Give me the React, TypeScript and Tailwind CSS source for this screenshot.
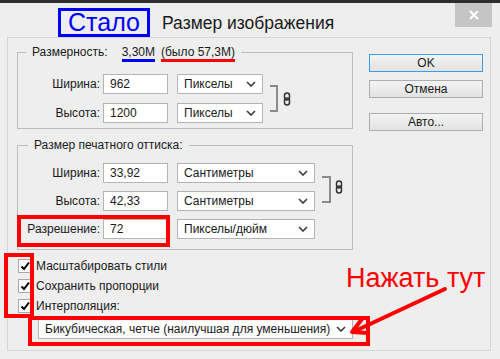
import React from "react";

const Chevron = () => (
  <svg width="10" height="6" viewBox="0 0 10 6" className="shrink-0">
    <path d="M1 1 L5 5 L9 1" fill="none" stroke="#3a3a3a" strokeWidth="1.6" />
  </svg>
);

const LinkIcon = () => (
  <svg width="8" height="14" viewBox="0 0 8 14">
    <rect x="1.5" y="1" width="5" height="7" rx="2.5" fill="none" stroke="#333" strokeWidth="1.5" />
    <rect x="1.5" y="6" width="5" height="7" rx="2.5" fill="none" stroke="#333" strokeWidth="1.5" />
  </svg>
);

const Select = ({ value, w }: { value: string; w: string }) => (
  <div className={`${w} h-[20px] bg-white border border-[#b4b4b4] flex items-center justify-between pl-[6px] pr-[6px]`}>
    <span>{value}</span>
    <Chevron />
  </div>
);

const Row = ({ label, value, unit, w }: { label: string; value: string; unit: string; w: string }) => (
  <div className="flex items-center h-[20px]">
    <span className="w-[85px] text-right pr-[3px]">{label}</span>
    <div className="w-[65px] h-[20px] bg-white border border-[#b4b4b4] flex items-center pl-[6px]">{value}</div>
    <div className="ml-[9px]">
      <Select value={unit} w={w} />
    </div>
  </div>
);

const Check = ({ label }: { label: string }) => (
  <div className="flex items-center h-[20px]">
    <div className="w-[14px] h-[14px] bg-white border border-[#a8a8a8] flex items-center justify-center">
      <svg width="10" height="10" viewBox="0 0 10 10">
        <path d="M1.5 5.5 L4 8 L9 1.5" fill="none" stroke="#000" strokeWidth="2" />
      </svg>
    </div>
    <span className="ml-[4px]">{label}</span>
  </div>
);

const Btn = ({ label, primary }: { label: string; primary?: boolean }) => (
  <div
    className={`w-[114px] h-[18px] flex items-center justify-center bg-gradient-to-b from-[#f4f4f4] to-[#e2e2e2] border ${
      primary ? "border-[#3c9ce8]" : "border-[#adadad]"
    }`}
  >
    {label}
  </div>
);

const App = () => {
  return (
    <div className="relative w-[500px] h-[359px] overflow-hidden bg-[#eeeeee] text-[12px] text-[#1a1a1a] font-['Liberation_Sans',Arial,sans-serif]">
      <div className="h-[3px] bg-[#2e2e2e]" />

      {/* header */}
      <div className="flex items-start h-[34px]">
        <div className="ml-[58px] mt-[5px] w-[92px] h-[29px] border-[3px] border-[#0000ff] flex items-center justify-center text-[25px] leading-none text-[#0000ff]">
          Стало
        </div>
        <div className="ml-[12px] mt-[8px] text-[17.5px] leading-[24px]">Размер изображения</div>
        <div className="ml-auto mr-[8px] w-[37px] h-[24px] bg-[#c5c5c5] flex items-center justify-center">
          <svg width="10" height="10" viewBox="0 0 10 10">
            <path d="M1 1 L9 9 M9 1 L1 9" stroke="#fff" strokeWidth="2" />
          </svg>
        </div>
      </div>

      {/* main panel */}
      <div className="ml-[7px] w-[484px] h-[314px] border border-[#d6d6d6] flex">
        <div className="pl-[9px] w-[346px]">
          <fieldset className="mt-[6px] w-[336px] border border-[#bdbdbd] pb-[5px]">
            <legend className="ml-[8px] px-[6px] leading-[16px]">
              Размерность:
              <span className="ml-[14px] border-b-[3px] border-[#0000ff]">3,30M</span>
              <span className="ml-[6px] border-b-[3px] border-[#ff0000]">(было 57,3M)</span>
            </legend>
            <div className="mt-[14px] flex items-center">
              <div className="flex flex-col gap-[9px]">
                <Row label="Ширина:" value="962" unit="Пикселы" w="w-[86px]" />
                <Row label="Высота:" value="1200" unit="Пикселы" w="w-[86px]" />
              </div>
              <div className="ml-[7px] w-[8px] h-[27px] border-t-2 border-r-2 border-b-2 border-[#8a8a8a]" />
              <div className="ml-[5px]">
                <LinkIcon />
              </div>
            </div>
          </fieldset>

          <fieldset className="mt-[8px] w-[336px] border border-[#bdbdbd] pb-[10px]">
            <legend className="ml-[10px] px-[6px] leading-[16px]">Размер печатного оттиска:</legend>
            <div className="mt-[10px] flex flex-col gap-[8px]">
              <div className="flex items-center">
                <div className="flex flex-col gap-[8px]">
                  <Row label="Ширина:" value="33,92" unit="Сантиметры" w="w-[138px]" />
                  <Row label="Высота:" value="42,33" unit="Сантиметры" w="w-[138px]" />
                </div>
                <div className="ml-[7px] mt-[4px] w-[9px] h-[27px] border-t-2 border-r-2 border-b-2 border-[#8a8a8a]" />
                <div className="ml-[4px]">
                  <LinkIcon />
                </div>
              </div>
              <Row label="Разрешение:" value="72" unit="Пикселы/дюйм" w="w-[138px]" />
            </div>
          </fieldset>

          <div className="mt-[6px] pl-[1px]">
            <Check label="Масштабировать стили" />
            <Check label="Сохранить пропорции" />
            <Check label="Интерполяция:" />
          </div>
          <div className="mt-[3px] ml-[21px] w-[315px] h-[20px] bg-white border border-[#b4b4b4] flex items-center justify-between pl-[6px] pr-[6px]">
            <span>Бикубическая, четче (наилучшая для уменьшения)</span>
            <Chevron />
          </div>
        </div>

        <div className="ml-[15px] pt-[16px] flex flex-col">
          <Btn label="OK" primary />
          <div className="mt-[8px]">
            <Btn label="Отмена" />
          </div>
          <div className="mt-[15px]">
            <Btn label="Авто..." />
          </div>
        </div>
      </div>

      {/* annotations */}
      <div className="absolute left-[17px] top-[215px] w-[153px] h-[32px] border-[4px] border-[#ff0000]" />
      <div className="absolute left-[4px] top-[253px] w-[30px] h-[65px] border-[4px] border-[#ff0000]" />
      <div className="absolute left-[28px] top-[316px] w-[342px] h-[30px] border-[4px] border-[#ff0000]" />
      <div className="absolute left-[346px] top-[263px] text-[27px] leading-[30px] text-[#ff0000]">Нажать тут</div>
      <svg className="absolute left-[345px] top-[282px]" width="110" height="60" viewBox="0 0 110 60">
        <path d="M100 7 L8 50" stroke="#ff0000" strokeWidth="4" strokeLinecap="round" />
        <path d="M17 37 L7 50 L23 51" fill="none" stroke="#ff0000" strokeWidth="4" strokeLinecap="round" strokeLinejoin="round" />
      </svg>
    </div>
  );
};

export default App;
